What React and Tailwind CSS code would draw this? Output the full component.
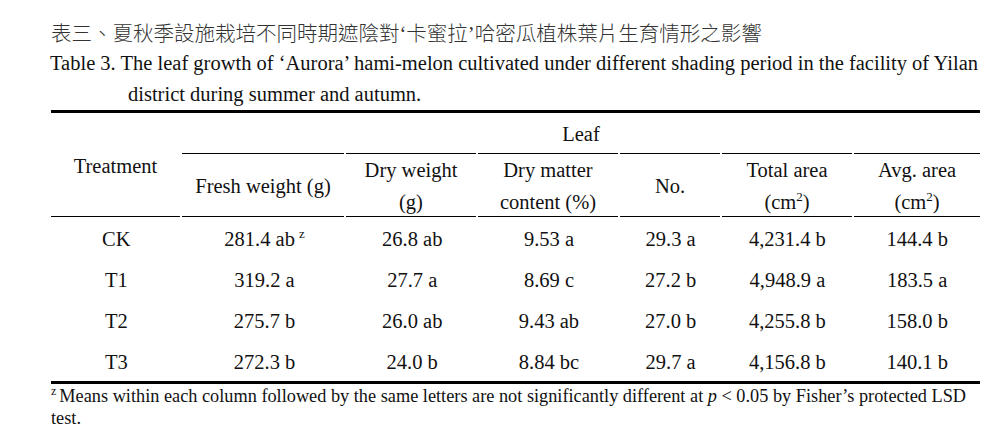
const COLS = [
  { key: "fresh", w: "w-[162px]" },
  { key: "dry", w: "w-[130px]" },
  { key: "dm", w: "w-[140px]" },
  { key: "no", w: "w-[100px]" },
  { key: "total", w: "w-[130px]" },
  { key: "avg", w: "w-[126px]" },
];

const ROWS = [
  { t: "CK", v: ["281.4 ab", "26.8 ab", "9.53 a", "29.3 a", "4,231.4 b", "144.4 b"], note: true },
  { t: "T1", v: ["319.2 a", "27.7 a", "8.69 c", "27.2 b", "4,948.9 a", "183.5 a"] },
  { t: "T2", v: ["275.7 b", "26.0 ab", "9.43 ab", "27.0 b", "4,255.8 b", "158.0 b"] },
  { t: "T3", v: ["272.3 b", "24.0 b", "8.84 bc", "29.7 a", "4,156.8 b", "140.1 b"] },
];

function Cm2() {
  return (
    <>
      (cm<sup className="text-[13px] top-[-8px]">2</sup>)
    </>
  );
}

const HEADS = [
  <div>Fresh weight (g)</div>,
  <div>
    <div>Dry weight</div>
    <div>(g)</div>
  </div>,
  <div>
    <div>Dry matter</div>
    <div>content (%)</div>
  </div>,
  <div>No.</div>,
  <div>
    <div>Total area</div>
    <div><Cm2 /></div>
  </div>,
  <div>
    <div>Avg. area</div>
    <div><Cm2 /></div>
  </div>,
];

export default function App() {
  return (
    <div className="w-[1008px] h-[438px] bg-white text-[#111] font-['Liberation_Serif','Times_New_Roman',serif] overflow-hidden">
      <div className="pt-[16px] pl-[51px] h-[48px] leading-[32px] text-[20.5px] text-[#333] font-light font-['Noto_Sans_CJK_TC','Noto_Sans_CJK_SC',sans-serif] whitespace-nowrap">
        表三、夏秋季設施栽培不同時期遮陰對
        <span className="font-['Liberation_Serif',serif] font-normal">‘</span>
        卡蜜拉
        <span className="font-['Liberation_Serif',serif] font-normal">’</span>
        哈密瓜植株葉片生育情形之影響
      </div>
      <div className="pl-[50px] text-[20.5px] leading-[31px] whitespace-nowrap">
        <div>Table 3. The leaf growth of ‘Aurora’ hami-melon cultivated under different shading period in the facility of Yilan</div>
        <div className="pl-[78px]">district during summer and autumn.</div>
      </div>

      <div className="ml-[51px] w-[929px] border-t-[3px] border-b-[3px] border-black text-[20.5px]">
        <div className="flex gap-[2px]">
          <div className="w-[131px] h-[104px] border-b border-black flex items-center justify-center pt-[4px]">
            Treatment
          </div>
          <div className="flex-1 flex flex-col">
            <div className="h-[40px] flex items-center justify-center pt-[2px]">Leaf</div>
            <div className="flex gap-[2px]">
              {COLS.map((c, i) => (
                <div
                  key={c.key}
                  className={`${c.w} h-[64px] border-t border-b border-black flex items-center justify-center text-center leading-[32px] pt-[2px]`}
                >
                  {HEADS[i]}
                </div>
              ))}
            </div>
          </div>
        </div>

        {ROWS.map((r) => (
          <div key={r.t} className="flex gap-[2px] h-[41px] items-center">
            <div className="w-[131px] text-center pt-[3px]">{r.t}</div>
            {r.v.map((v, i) => (
              <div key={i} className={`${COLS[i].w} text-center pt-[3px]`}>
                {v}
                {r.note && i === 0 && (
                  <sup className="text-[13px] top-[-8px] ml-[4px]">z</sup>
                )}
              </div>
            ))}
          </div>
        ))}
      </div>

      <div className="pl-[51px] pr-[20px] text-[18.3px] leading-[22px] pt-[1px] whitespace-nowrap">
        <sup className="text-[12px] top-[-7px] mr-[3px]">z</sup>
        Means within each column followed by the same letters are not significantly different at <i>p</i> &lt; 0.05 by Fisher’s protected LSD
        <br />
        test.
      </div>
    </div>
  );
}
